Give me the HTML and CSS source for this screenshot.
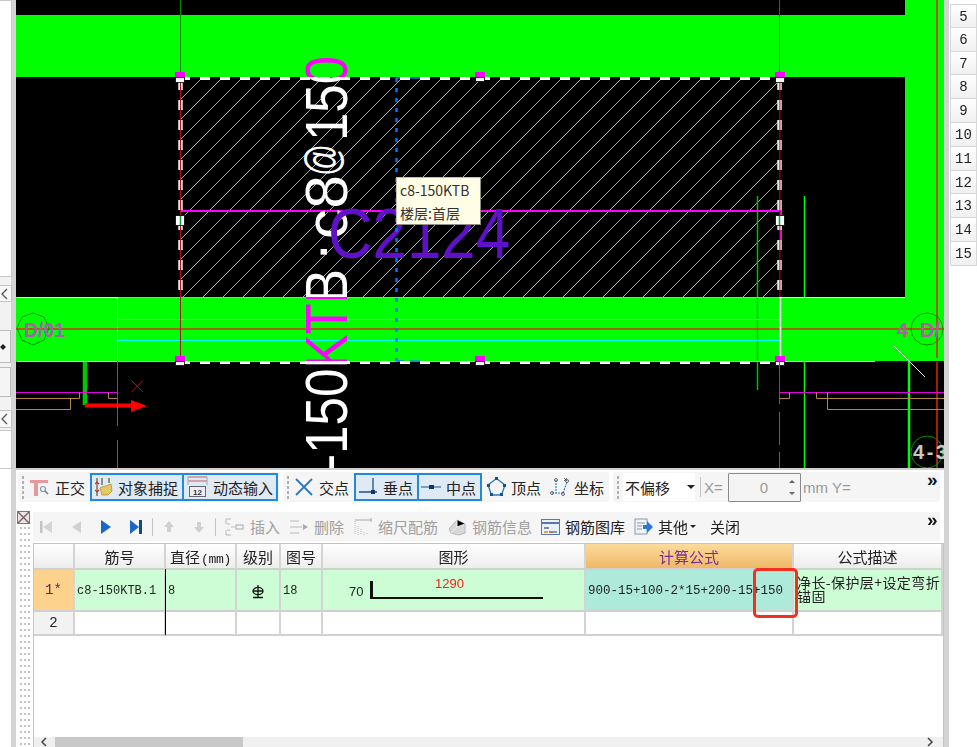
FILE: index.html
```html
<!DOCTYPE html>
<html lang="zh">
<head>
<meta charset="utf-8">
<title>钢筋编辑</title>
<link rel="stylesheet" href="styles.css">
</head>
<body>
<div class="app">
  <aside class="rail">
    <div class="rail-box rail-first"></div>
    <div class="rail-btn"><svg width="8" height="12" viewBox="0 0 8 12"><path d="M7 1 2 6l5 5" fill="none" stroke="#555" stroke-width="1.3"/></svg></div>
    <div class="rail-fold rail-fold-a"><svg width="6" height="8" viewBox="0 0 6 8"><path d="M0 4 3 1l3 3-3 3z" fill="#222"/></svg></div>
    <div class="rail-fold rail-fold-b"></div>
    <div class="rail-btn rail-btn-low"><svg width="8" height="12" viewBox="0 0 8 12"><path d="M7 1 2 6l5 5" fill="none" stroke="#555" stroke-width="1.3"/></svg></div>
    <div class="rail-box rail-last"></div>
  </aside>
  <div class="gutter"></div>

  <main class="center">
    <section class="canvas">
      <svg class="drawing" width="928" height="468" viewBox="16 0 928 468">
        <defs>
          <pattern id="hatch" patternUnits="userSpaceOnUse" width="20" height="20">
            <path d="M-2 22 22 -2" stroke="#a8a8a8" stroke-width="1" fill="none"/>
          </pattern>
          <clipPath id="onGreen"><rect x="16" y="15" width="928" height="62"/><rect x="16" y="297" width="928" height="64"/></clipPath>
          <clipPath id="offGreen"><rect x="16" y="77" width="928" height="220"/><rect x="16" y="361" width="928" height="107"/></clipPath>
        </defs>
        <rect x="16" y="0" width="928" height="468" fill="#000"/>
        <rect x="16" y="15" width="928" height="62" fill="#0f0"/>
        <rect x="905" y="0" width="39" height="298" fill="#0f0"/>
        <rect x="180" y="78" width="600" height="219" fill="url(#hatch)"/>
        <rect x="16" y="297" width="928" height="64" fill="#0f0"/>

        <path d="M180.500 0V78M779.500 0V78" stroke="#008a00" stroke-width="1"/>
        <path d="M757.500 196V390" stroke="#00c000" stroke-width="1.500"/>
        <path d="M804.500 196V468" stroke="#0f0" stroke-width="1.500"/>
        <path d="M909 361V468" stroke="#0f0" stroke-width="2.500"/>
        <path d="M16.500 297.500H117.500V361.500H16.500M780 297.500H905M780 361.500H875" fill="none" stroke="#ff0" stroke-width="1"/>
        <path d="M118 297.500H780M118 319.500H780M118 340.500H780M118 361.500H780" stroke="#00ffff" stroke-width="1.200"/>
        <path d="M16 329H944" stroke="#d83010" stroke-width="1.500"/>
        <path d="M937 0V358M937 362V468" stroke="#d82810" stroke-width="1.500"/>
        <path d="M780.500 297V361" stroke="#fff" stroke-width="1.500"/>
        <path d="M180 211H781V240" fill="none" stroke="#f0f" stroke-width="2"/>

        <g class="cad-vert" clip-path="url(#offGreen)" fill="#fff">
          <text transform="translate(347 471) rotate(-90)" textLength="202" lengthAdjust="spacingAndGlyphs">-150KTB</text>
          <text transform="translate(327 260) rotate(-90)">.</text>
          <text transform="translate(347 239) rotate(-90)" textLength="64" lengthAdjust="spacingAndGlyphs">c8</text>
          <text class="cad-at" transform="translate(338 176) rotate(-90)" textLength="32" lengthAdjust="spacingAndGlyphs">@</text>
          <text transform="translate(347 141) rotate(-90)" textLength="85" lengthAdjust="spacingAndGlyphs">150</text>
        </g>
        <g class="cad-vert" clip-path="url(#onGreen)" fill="#f0f">
          <text transform="translate(347 471) rotate(-90)" textLength="202" lengthAdjust="spacingAndGlyphs">-150KTB</text>
          <text transform="translate(347 141) rotate(-90)" textLength="85" lengthAdjust="spacingAndGlyphs">150</text>
        </g>
        <text class="cad-purple" x="328" y="258" textLength="182" lengthAdjust="spacingAndGlyphs">C2124</text>

        <path d="M396.500 78V361" stroke="#0078e8" stroke-width="2.500" stroke-dasharray="4 6"/>
        <path d="M396 78H404M410 78H420M396 361H404M410 361H420" stroke="#0078e8" stroke-width="1.500"/>

        <path d="M180 78.500H780M180 362.500H780" stroke="#fff" stroke-width="3" stroke-dasharray="10 10"/>
        <path d="M180.500 80V297M779.500 80V297" stroke="#fff" stroke-width="4.500" stroke-dasharray="10 10" opacity=".92"/>
        <path d="M180.500 78V356M779.900 78V297" stroke="#b01020" stroke-width="1"/>

        <g fill="#f0f">
          <rect x="175" y="72" width="10" height="5"/><rect x="475" y="72" width="10" height="5"/><rect x="775" y="72" width="10" height="5"/>
          <rect x="175" y="356" width="10" height="5"/><rect x="475" y="356" width="10" height="5"/><rect x="775" y="356" width="10" height="5"/>
        </g>
        <g fill="#fff" stroke="#000" stroke-width=".8">
          <rect x="175.500" y="77.500" width="9" height="5"/><rect x="475.500" y="77.500" width="9" height="4"/><rect x="775.500" y="77.500" width="9" height="5"/>
          <rect x="175.500" y="361.500" width="9" height="4"/><rect x="475.500" y="361.500" width="9" height="4"/><rect x="775.500" y="361.500" width="9" height="4"/>
          <rect x="175.500" y="215.500" width="9" height="10"/><rect x="775.500" y="215.500" width="9" height="10"/>
        </g>
        <path d="M180.500 216V225M779.500 216V225" stroke="#00a040" stroke-width="1.500"/>

        <path d="M85 362V405" stroke="#00c800" stroke-width="4.500"/>
        <path d="M85 405.500H132" stroke="#f00" stroke-width="4"/>
        <path d="M131 400 147 406 131 412z" fill="#f00"/>
        <path d="M131.500 380.500 143 392M143 380.500 131.500 392" stroke="#e00000" stroke-width="1"/>
        <path d="M117.500 361V392.500H16M779.500 361V392.500H944" fill="none" stroke="#e000e0" stroke-width="1"/>
        <path d="M117.500 392V426M117.500 440V468M779.500 392V404M779.500 412V445M779.500 452V468" stroke="#5858a8" stroke-width="1"/>
        <path d="M16 398.500H79.500V392.500M16 409.500H70.500V398.500M108.500 392.500V398.500H117M779 398.500H789.500V392.500M816.500 392.500V398.500H944M827.500 392.500V409.500H944" fill="none" stroke="#b08848" stroke-width="1"/>

        <path d="M894 346 925 377" stroke="#e8e8e8" stroke-width="1"/>
        <polygon points="33,313 44,317 49,328 44,340 33,345 22,340 17,328 22,317" fill="none" stroke="#009000" stroke-width="1"/>
        <circle cx="927" cy="329" r="16" fill="none" stroke="#009000" stroke-width="1"/>
        <circle cx="927" cy="452" r="16" fill="none" stroke="#009000" stroke-width="1"/>
        <text class="cad-axis" x="24" y="337" textLength="41" lengthAdjust="spacingAndGlyphs">D/01</text>
        <text class="cad-axis" x="897" y="337">4</text>
        <text class="cad-axis" x="920" y="337">D/</text>
        <text class="cad-grid" x="913" y="459" textLength="34" lengthAdjust="spacing">4-3</text>
      </svg>
      <div class="tooltip">
        <div>c8-150KTB</div>
        <div>楼层:首层</div>
      </div>
    </section>

    <section class="panel">
      <div class="bar-top">
        <div class="group group-a">
          <i class="grip"></i>
          <div class="tool">
            <svg width="20" height="20" viewBox="0 0 20 20"><path d="M0 3h18v3H8v13H4V6H0z" fill="#e89898"/><circle cx="13" cy="12" r="2.500" fill="none" stroke="#8898a8" stroke-width="1.200"/><path d="M15 14l3 3" stroke="#778" stroke-width="1.500"/></svg>
            <span>正交</span>
          </div>
          <div class="pair">
            <div class="tool btn btn-snap">
              <svg width="18" height="20" viewBox="0 0 18 20"><path d="M2 1v18" stroke="#7a4a30" stroke-width="1.200"/><path d="M0 7l2-2 2 2M0 13l2 2 2-2" fill="none" stroke="#c03020" stroke-width="1.200"/><path d="M5 11c2-1 4-2 6-2l5-2 1 7-4 4H7z" fill="#e8c860" stroke="#a88830" stroke-width=".7"/><path d="M7 1v7M14 1v5" stroke="#553" stroke-width="1.200"/></svg>
              <span>对象捕捉</span>
            </div>
            <div class="tool btn btn-input">
              <svg width="21" height="22" viewBox="0 0 21 22"><path d="M1 1h19M1 5h19" stroke="#c86060" stroke-width="1.200"/><path d="M1 1v8M20 1v8" stroke="#a8a8a8"/><rect x="2.500" y="10.500" width="16" height="10" fill="#eee" stroke="#667"/><text class="icon-num" x="6" y="18.500">12</text></svg>
              <span>动态输入</span>
            </div>
          </div>
        </div>

        <div class="group group-b">
          <i class="grip"></i>
          <div class="tool">
            <svg width="19" height="20" viewBox="0 0 19 20"><path d="M1 2l16 16M17 2 1 18" stroke="#2878c8" stroke-width="1.800"/></svg>
            <span>交点</span>
          </div>
          <div class="pair pair-snap">
            <div class="tool btn btn-perp">
              <svg width="20" height="20" viewBox="0 0 20 20"><path d="M1 15h18M15 1v14" stroke="#185090" stroke-width="1.300"/><rect x="13" y="13" width="4" height="4" fill="#103868"/></svg>
              <span>垂点</span>
            </div>
            <div class="tool btn btn-mid">
              <svg width="20" height="20" viewBox="0 0 20 20"><path d="M0 10h20" stroke="#3878b8" stroke-width="1.300"/><rect x="8" y="8" width="5" height="4" fill="#103868"/></svg>
              <span>中点</span>
            </div>
          </div>
          <div class="tool">
            <svg width="19" height="20" viewBox="0 0 19 20"><path d="M9.500 1.500 18 8l-3.500 10h-10L1 8z" fill="none" stroke="#2878c8" stroke-width="1.300"/><g fill="#185090"><rect x="8" y="0" width="3" height="3"/><rect x="0" y="7" width="3" height="3"/><rect x="16" y="7" width="3" height="3"/><rect x="3" y="16" width="3" height="3"/><rect x="13" y="16" width="3" height="3"/></g></svg>
            <span>顶点</span>
          </div>
          <div class="tool tool-coord">
            <svg width="19" height="20" viewBox="0 0 19 20"><path d="M6 3v13M2 16h11M13 16l4-11" fill="none" stroke="#3088c8" stroke-width="1.200" stroke-dasharray="2 1"/><g fill="none" stroke="#445" stroke-width=".8"><circle cx="6" cy="3" r="1.500"/><circle cx="2" cy="16" r="1.500"/><circle cx="17" cy="4" r="1.500"/><circle cx="13" cy="17" r="1.500"/><path d="M14 1l3 3M17 1l-3 3"/></g></svg>
            <span>坐标</span>
          </div>
        </div>

        <div class="group group-c">
          <i class="grip"></i>
          <div class="select"><span>不偏移</span><b class="caret"></b></div>
          <i class="sep"></i>
          <span class="muted label-x">X=</span>
          <div class="spin">
            <span>0</span>
            <div class="spin-arrows"><i class="up"></i><i class="down"></i></div>
          </div>
          <span class="muted">mm Y=</span>
          <span class="more">»</span>
        </div>
      </div>

      <div class="panel-body">
        <div class="dock">
          <svg class="dock-close" width="13" height="13" viewBox="0 0 13 13"><rect x=".5" y=".5" width="12" height="12" fill="#f4e0e0" stroke="#a06868"/><path d="M1 1l11 11M12 1 1 12" stroke="#666" stroke-width="1.400"/></svg>
          <div class="dots"></div>
        </div>
        <div class="editor">
          <div class="bar-sub">
            <div class="nav">
              <svg width="12" height="14" viewBox="0 0 12 14"><rect x="0" y="1" width="2.500" height="12" fill="#c4c4c4"/><path d="M12 1v12L3 7z" fill="#d4d4d4"/></svg>
              <svg width="12" height="14" viewBox="0 0 12 14"><path d="M11 1v12L2 7z" fill="#d0d0d0"/></svg>
              <svg width="12" height="14" viewBox="0 0 12 14"><path d="M1 0v14l10-7z" fill="#1868c8"/></svg>
              <svg width="12" height="14" viewBox="0 0 12 14"><path d="M0 0v14l9-7z" fill="#1868c8"/><rect x="9" y="0" width="3" height="14" fill="#104890"/></svg>
            </div>
            <i class="sep sep-nav"></i>
            <div class="nav">
              <svg width="12" height="14" viewBox="0 0 12 14"><path d="M6 1 1 7h3v5h4V7h3z" fill="#d0d0d0"/></svg>
              <svg width="12" height="14" viewBox="0 0 12 14"><path d="M6 13 1 7h3V2h4v5h3z" fill="#d0d0d0"/></svg>
            </div>
            <i class="sep sep-nav"></i>
            <div class="tool off tool-first">
              <svg width="20" height="20" viewBox="0 0 20 20"><path d="M6 2H1v5M1 13v5h5M2 7h3M2 13h3M6 10h4" fill="none" stroke="#b8b8b8"/><rect x="11" y="8" width="7" height="4" fill="none" stroke="#aaa"/></svg>
              <span>插入</span>
            </div>
            <div class="tool off">
              <svg width="20" height="20" viewBox="0 0 20 20"><path d="M1 4h9M1 10h12M1 16h9" stroke="#b8b8b8"/><path d="M14 7l5 3-5 3z" fill="#aaa"/></svg>
              <span>删除</span>
            </div>
            <div class="tool off">
              <svg width="20" height="20" viewBox="0 0 20 20"><path d="M2 4v14M5 9v9M8 12v6M11 15v3M14 16v2" stroke="#b8b8b8" stroke-dasharray="1 1"/><path d="M2 3h16M18 1v4" stroke="#a8a8a8"/></svg>
              <span>缩尺配筋</span>
            </div>
            <div class="tool off">
              <svg width="20" height="20" viewBox="0 0 20 20"><path d="M2 12 10 3l8 4v9l-6 2-8-2z" fill="#d8d8d8" stroke="#b8b8b8"/><path d="M10 3v7l8-3M10 10l-6 6" stroke="#eee"/></svg>
              <span>钢筋信息</span>
            </div>
            <div class="tool">
              <svg width="19" height="18" viewBox="0 0 19 18"><rect x=".5" y="1.500" width="18" height="15" fill="#e8f0f8" stroke="#5878a8"/><path d="M1 5h17" stroke="#5878a8" stroke-width="2"/><path d="M3 9h5v2H3z" fill="#889"/><path d="M3 14h4" stroke="#d88830" stroke-width="1.500"/><path d="M8 14h4" stroke="#c84040" stroke-width="1.500"/><path d="M12 14h4" stroke="#4888c8" stroke-width="1.500"/></svg>
              <span>钢筋图库</span>
            </div>
            <div class="tool">
              <svg width="19" height="20" viewBox="0 0 19 20"><rect x="1" y="2" width="12" height="15" fill="#f0f4f8" stroke="#8898b0"/><path d="M3 6h8M3 9h5M3 12h5" stroke="#8898b0"/><path d="M9 8h4V4l6 6-6 6v-4H9z" fill="#2878d8"/></svg>
              <span>其他</span><b class="caret caret-sm"></b>
            </div>
            <div class="tool tool-close"><span>关闭</span></div>
            <span class="more">»</span>
          </div>

          <div class="grid-wrap">
            <table class="grid">
              <colgroup>
                <col class="c-idx"><col class="c-no"><col class="c-dia"><col class="c-grade"><col class="c-fig"><col class="c-shape"><col class="c-calc"><col class="c-desc">
              </colgroup>
              <thead>
                <tr>
                  <th></th><th>筋号</th><th>直径<span class="mm">(mm)</span></th><th>级别</th><th>图号</th><th>图形</th><th class="th-active">计算公式</th><th>公式描述</th>
                </tr>
              </thead>
              <tbody>
                <tr class="row-on">
                  <th class="idx idx-on">1*</th>
                  <td class="mono">c8-150KTB.1</td>
                  <td class="mono">8</td>
                  <td class="center-cell">
                    <svg width="14" height="14" viewBox="0 0 14 14"><ellipse cx="7" cy="6" rx="5" ry="3.600" fill="none" stroke="#111" stroke-width="1.300"/><path d="M7 0v12M2 12.500h10M2 6h10" stroke="#111" stroke-width="1.300"/></svg>
                  </td>
                  <td class="mono">18</td>
                  <td class="shape-cell">
                    <div class="shape">
                      <span class="shape-a">70</span>
                      <div class="shape-body"><span class="shape-b">1290</span></div>
                    </div>
                  </td>
                  <td class="mono calc">900-15+100-2*15+200-15+150</td>
                  <td class="desc"><div class="desc-clip"><span>净长-保护层+设定弯折</span><span>锚固</span></div></td>
                </tr>
                <tr class="row-blank">
                  <th class="idx">2</th><td></td><td></td><td></td><td></td><td></td><td></td><td></td>
                </tr>
              </tbody>
            </table>
            <div class="cursor"></div>
            <div class="callout"></div>
            <div class="scroll">
              <svg width="8" height="10" viewBox="0 0 8 10"><path d="M6 1 2 5l4 4" fill="none" stroke="#444" stroke-width="1.500"/></svg>
              <div class="thumb"></div>
              <svg class="scroll-end" width="8" height="10" viewBox="0 0 8 10"><path d="M2 1l4 4-4 4" fill="none" stroke="#444" stroke-width="1.500"/></svg>
            </div>
          </div>
        </div>
      </div>
    </section>
  </main>
  <div class="gutter"></div>

  <aside class="rows">
    <div class="row-no">5</div><div class="row-no">6</div><div class="row-no">7</div><div class="row-no">8</div>
    <div class="row-no">9</div><div class="row-no">10</div><div class="row-no">11</div><div class="row-no">12</div>
    <div class="row-no">13</div><div class="row-no">14</div><div class="row-no">15</div>
  </aside>
</div>
</body>
</html>
```

FILE: styles.css
```css
* { box-sizing: border-box; }
html, body { margin: 0; padding: 0; background: #fff; }
body {
  font-family: "Noto Sans CJK SC", "Liberation Sans", sans-serif;
  font-size: 15px;
  color: #222;
}
.app {
  width: 977px;
  height: 747px;
  overflow: hidden;
  display: flex;
  filter: blur(.3px);
}

/* left rail */
.rail { width: 11px; flex: none; position: relative; display: flex; flex-direction: column; height: 468px; background: #f2f2f2; }
.rail-box { width: 12px; background: #fff; border: 1px solid #c8c8c8; border-left: 0; flex: none; }
.rail-first { height: 277px; }
.rail-last { height: 39px; margin-top: 2px; }
.rail-btn { width: 12px; height: 17px; margin-top: 8px; flex: none; background: #f8f8f8; border: 1px solid #c4c4c4; border-left: 0; display: flex; align-items: center; }
.rail-btn-low { margin-top: 13px; height: 18px; }
.rail-fold { width: 11px; flex: none; background: #f5f5f5; border: 1px solid #bbb; border-left: 0; display: flex; align-items: center; }
.rail-fold-a { height: 33px; margin-top: 28px; }
.rail-fold-b { height: 30px; margin-top: 4px; }
.gutter { width: 5px; flex: none; background: #d4d4d4; }

/* canvas */
.center { width: 928px; flex: none; display: flex; flex-direction: column; }
.canvas { height: 468px; flex: none; position: relative; overflow: hidden; background: #000; }
.drawing { display: block; }
.cad-vert text { font-family: "Liberation Sans", sans-serif; font-size: 59px; }
.cad-vert .cad-at { font-size: 46px; }
.cad-purple { font-family: "Liberation Sans", sans-serif; font-size: 70px; fill: #6010c8; }
.cad-axis { font-family: "Liberation Sans", sans-serif; font-size: 20px; font-weight: 700; fill: #a860a8; }
.cad-grid { font-family: "Liberation Sans", sans-serif; font-size: 20px; font-weight: 700; fill: #c8c8c8; }
.icon-num { font: 700 8px "Liberation Sans", sans-serif; fill: #334; }
.tooltip {
  position: absolute;
  left: 380px;
  top: 177px;
  width: 85px;
  height: 48px;
  padding: 1px 0 0 3px;
  background: #fffde6;
  border: 1px solid #c0c0b0;
  border-right-color: #909088;
  border-bottom-color: #909088;
  font-size: 14px;
  line-height: 23px;
  color: #333;
}

/* lower panel */
.panel { flex: 1; min-height: 0; background: #fff; border-top: 2px solid #d0d0d0; display: flex; flex-direction: column; }
.bar-top { display: flex; gap: 4px; height: 32px; padding: 2px 4px 0 2px; flex: none; }
.group { display: flex; align-items: center; gap: 5px; height: 30px; background: #f5f5f5; border-radius: 3px; padding-left: 3px; flex: none; }
.group-a { width: 261px; }
.group-b { width: 326px; }
.group-c { width: 327px; gap: 0; }
.grip {
  width: 4px;
  height: 24px;
  flex: none;
  background: radial-gradient(circle at center, #b0b0b0 1.200px, transparent 1.400px) 0 0 / 4px 5px;
}
.tool { display: flex; align-items: center; gap: 5px; flex: none; height: 28px; white-space: nowrap; }
.tool svg { flex: none; }
.pair { display: flex; }
.pair-snap { margin-left: 0; }
.btn { border: 2px solid #1e8ae0; background: #dfeaf5; }
.btn-snap { padding: 0 4px 0 3px; border-right-width: 1px; }
.btn-input { padding: 0 3px 0 3px; border-left-width: 1px; }
.btn-perp { padding: 0 4px 0 2px; border-right-width: 1px; }
.btn-mid { padding: 0 4px 0 2px; border-left-width: 1px; }
.tool-coord { margin-left: 4px; }

.select { width: 72px; height: 28px; margin-left: 3px; background: #fff; display: flex; align-items: center; padding-left: 2px; position: relative; flex: none; }
.caret { width: 0; height: 0; border: 4px solid transparent; border-top-color: #222; border-bottom: 0; margin-left: 17px; flex: none; }
.caret-sm { margin-left: -3px; border-width: 3px; border-bottom: 0; border-top-color: #222; }
.sep { width: 1px; height: 20px; background: #c4c4c4; flex: none; }
.group-c .sep { margin: 0 3px 0 5px; }
.muted { color: #9a9a9a; font-family: "Liberation Sans", sans-serif; font-size: 15px; flex: none; }
.label-x { width: 24px; }
.spin { width: 73px; height: 29px; border: 1px solid #8a8a8a; background: #f4f4f4; display: flex; align-items: center; justify-content: flex-end; color: #999; font-family: "Liberation Sans", sans-serif; font-size: 15px; margin-right: 2px; flex: none; border-radius: 1px; }
.spin-arrows { width: 16px; margin-left: 16px; display: flex; flex-direction: column; gap: 9px; align-items: center; }
.spin-arrows i { width: 0; height: 0; border: 3px solid transparent; }
.spin-arrows .up { border-top: 0; border-bottom-color: #666; }
.spin-arrows .down { border-bottom: 0; border-top-color: #666; }
.more { margin-left: auto; width: 12px; margin-right: 1px; align-self: flex-start; font: 700 19px/16px "Liberation Sans", sans-serif; color: #111; flex: none; }

.panel-body { flex: 1; min-height: 0; display: flex; padding-top: 7px; }
.dock { width: 17px; flex: none; padding-left: 1px; display: flex; flex-direction: column; margin-top: 2px; }
.dock-close { flex: none; }
.dots { flex: 1; margin: 1px 2px 0 2px; background: radial-gradient(circle at center, #c4c4c4 .9px, transparent 1.200px) 0 0 / 4px 6px; }
.editor { flex: 1; min-width: 0; display: flex; flex-direction: column; }
.bar-sub { height: 29px; flex: none; margin: 3px 4px 0 0; background: #f5f5f5; display: flex; align-items: center; gap: 9px; padding-left: 7px; }
.nav { display: flex; gap: 18px; align-items: center; flex: none; }
.sep-nav { margin: 0 1px; height: 18px; }
.off { color: #a0a0a0; }
.tool-first { margin-left: -1px; }
.tool-close { margin-left: 5px; }

.grid-wrap { flex: 1; min-height: 0; margin-top: 2px; position: relative; border: 1px solid #c4c4c4; border-width: 1px 1px 0 1px; overflow: hidden; display: flex; flex-direction: column; }
.grid { width: 909px; table-layout: fixed; border-collapse: separate; border-spacing: 0; flex: none; }
.grid th, .grid td { padding: 0; border-right: 2px solid #d4d4d4; border-bottom: 2px solid #d0d0d0; overflow: hidden; }
.c-idx { width: 41px; }
.c-no { width: 91px; }
.c-dia { width: 71px; }
.c-grade { width: 44px; }
.c-fig { width: 42px; }
.c-shape { width: 263px; }
.c-calc { width: 208px; }
.c-desc { width: 149px; }
thead th { height: 26px; font-weight: 400; font-size: 15px; line-height: 22px; padding-top: 1px !important; background: linear-gradient(#fff, #ededed); color: #222; }
.th-active { background: linear-gradient(#fbdc9c, #efb868); color: #7c2c92; }
.mm { font-family: "Liberation Mono", monospace; font-size: 13px; line-height: 1; letter-spacing: -.3px; margin-left: 1px; }
.row-on { height: 42px; background: #ccfdd4; }
.row-blank { height: 24px; }
.idx { font: 400 14px "Liberation Mono", monospace; background: #f2f2f2; }
.idx-on { background: #fcd28d; color: #641a5c; }
.mono { font: 12px "Liberation Mono", monospace; padding: 2px 0 0 2px !important; color: #222; white-space: nowrap; }
.calc { background: #aeeada; font-size: 12.500px; padding-left: 2px !important; }
.center-cell { text-align: center; }
.center-cell svg { vertical-align: middle; }
.shape { display: flex; align-items: center; padding-left: 26px; height: 40px; }
.shape-a { font: 13px "Liberation Sans", sans-serif; width: 21px; flex: none; padding-top: 2px; }
.shape-body { width: 173px; height: 18px; margin-top: 0; border-left: 3px solid #111; border-bottom: 2px solid #111; position: relative; }
.shape-b { position: absolute; left: 62px; top: -5px; font: 13px "Liberation Sans", sans-serif; color: #f02020; }
.desc { font-size: 14px; }
.desc-clip { display: flex; flex-direction: column; line-height: 14px; white-space: nowrap; overflow: hidden; padding-left: 3px; margin-top: -2px; letter-spacing: .4px; }
.cursor { position: absolute; left: 131px; top: 25px; width: 1px; height: 66px; background: #000; }
.callout { position: absolute; left: 719px; top: 24px; width: 45px; height: 50px; border: 3px solid #f03020; border-radius: 5px; }
.scroll { height: 10px; margin-top: auto; flex: none; background: #f0f0f0; display: flex; align-items: center; padding-left: 6px; position: relative; }
.thumb { width: 188px; height: 10px; background: #c8c8c8; margin-left: 7px; flex: none; }
.scroll-end { margin-left: auto; margin-right: 9px; }

/* right numbered rows */
.rows { flex: 1; min-width: 0; padding: 4px 0 0 1px; display: flex; flex-direction: column; align-items: stretch; }
.row-no {
  height: 23.800px;
  flex: none;
  background: linear-gradient(#fff, #f0f0f0);
  border: 1px solid #d8d8d8;
  border-width: 0 1px 1px 1px;
  font: 14px/24px "Liberation Mono", monospace;
  text-align: center;
  color: #222;
}
.row-no:first-child { border-top: 1px solid #d8d8d8; }
```
